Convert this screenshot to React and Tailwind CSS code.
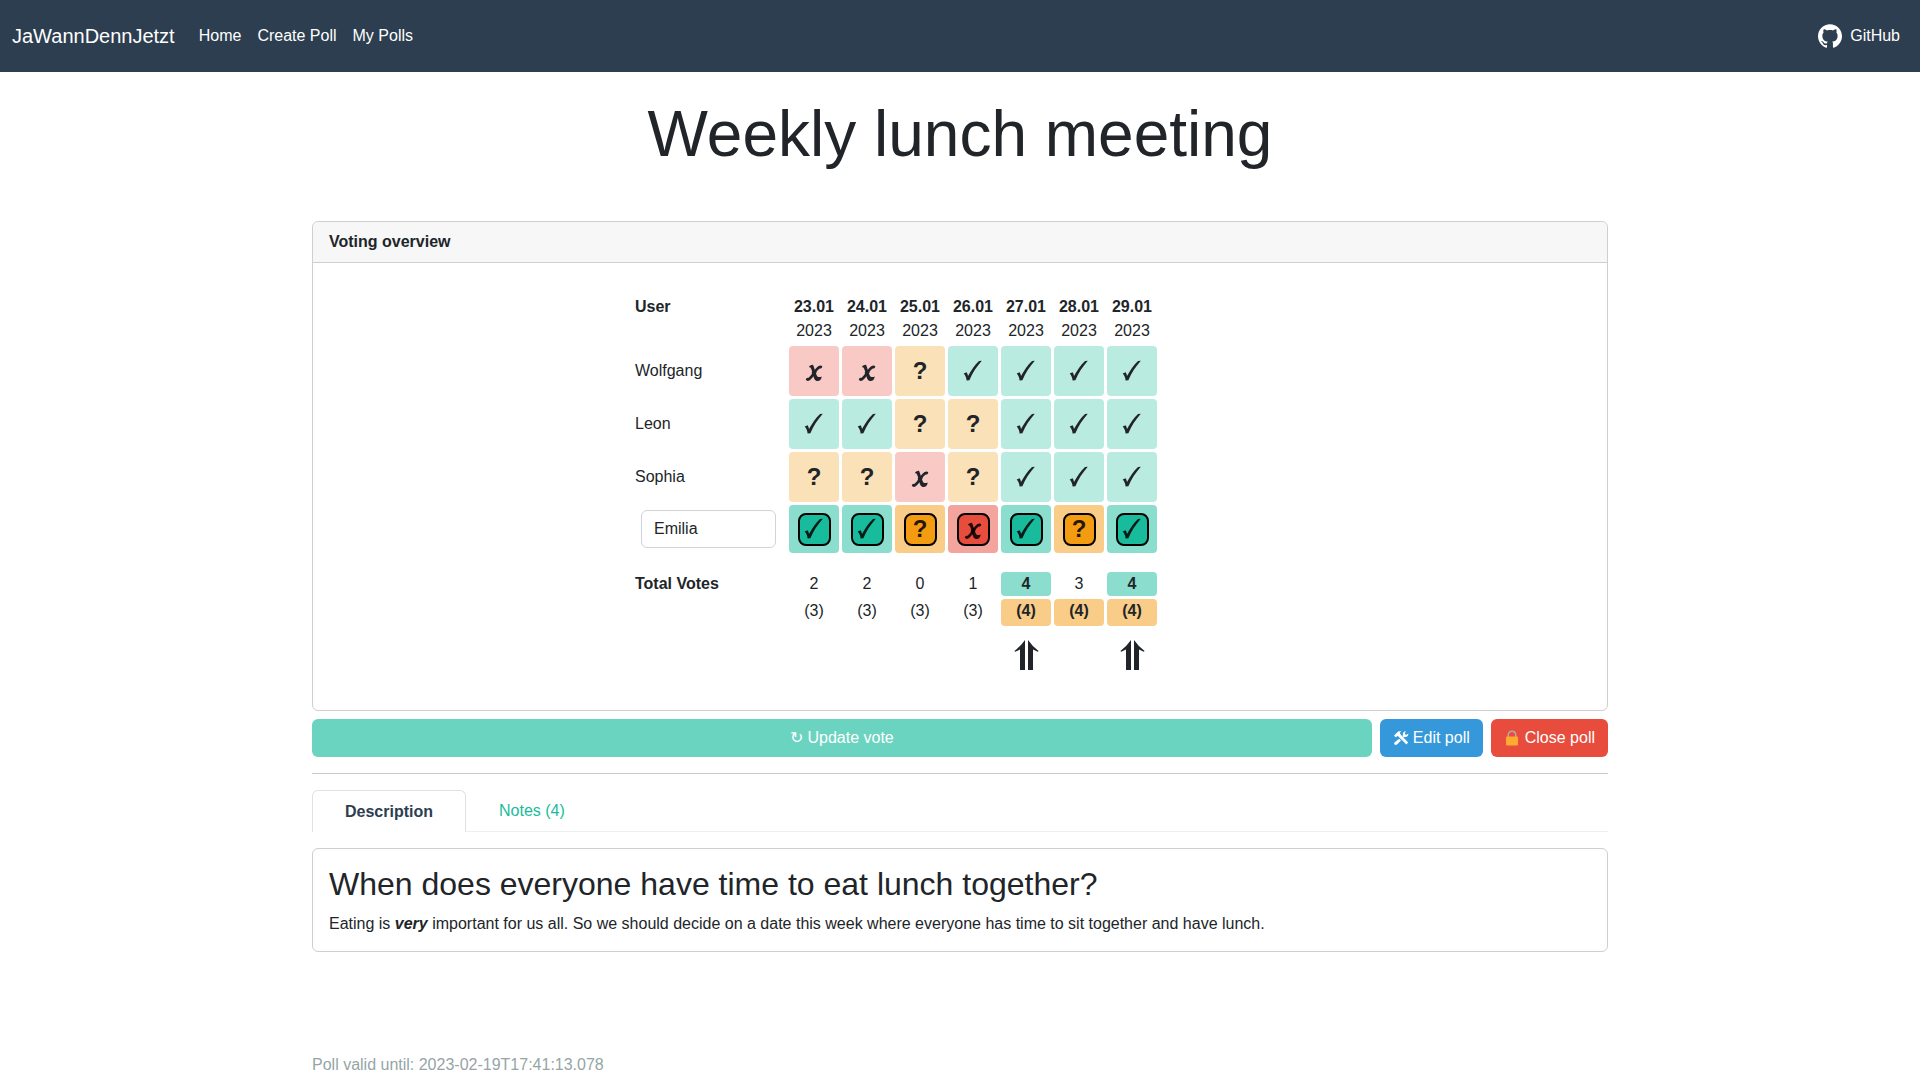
import { SiGithub } from "react-icons/si";

const DATES = ["23.01", "24.01", "25.01", "26.01", "27.01", "28.01", "29.01"];

const VOTES = [
  { name: "Wolfgang", votes: ["no", "no", "maybe", "yes", "yes", "yes", "yes"] },
  { name: "Leon", votes: ["yes", "yes", "maybe", "maybe", "yes", "yes", "yes"] },
  { name: "Sophia", votes: ["maybe", "maybe", "no", "maybe", "yes", "yes", "yes"] },
];

const OWN_VOTES = ["yes", "yes", "maybe", "no", "yes", "maybe", "yes"];

const TOTALS = [
  { yes: 2, possible: 3 },
  { yes: 2, possible: 3 },
  { yes: 0, possible: 3 },
  { yes: 1, possible: 3 },
  { yes: 4, possible: 4 },
  { yes: 3, possible: 4 },
  { yes: 4, possible: 4 },
];

const LABEL = { yes: "Yes", no: "No", maybe: "Maybe" };
const LIGHT = { yes: "bg-[#baebe1]", no: "bg-[#f8c9c5]", maybe: "bg-[#fbe1b8]" };
const MEDIUM = { yes: "bg-[#8bdecd]", no: "bg-[#f3a59d]", maybe: "bg-[#f9cd88]" };
const STRONG = { yes: "bg-[#18bc9c]", no: "bg-[#e74c3c]", maybe: "bg-[#f39c12]" };

function VoteSymbol({ vote }) {
  if (vote === "maybe") return "?";
  return (
    <svg viewBox="0 0 24 24" className="mx-auto size-6" fill="currentColor" aria-hidden="true">
      {vote === "yes" ? (
        <path d="M2.7 14.6 L5.6 13.2 C6.4 14.4 6.8 15.6 7 17 C10 11.5 13.6 6 18 2 L20.8 1.8 C15.4 8 11.4 14 8.4 21.2 L5.6 21.6 C5.4 18.8 4.4 16.4 2.7 14.6 Z" />
      ) : (
        <>
          <path d="M6.8 8 C8 6.2 9.6 5.6 11 5.7 C12.3 8.3 13 12.4 14.8 16.4 C15.6 18.2 17.4 18.4 19.8 17.4 C19.2 20.4 17.8 22 15.6 22 C12.8 22 11.8 19 10.9 15.4 C10.2 12.4 9.5 9.8 8.4 8.4 Z" />
          <path d="M3.8 20.6 C3.9 19.2 5.2 18.3 6.6 18.8 C10 16 12.2 9.8 16.6 7 C17.9 6.2 19.6 6.2 20.2 7.2 C20.4 8.6 19.2 9.5 17.8 9.5 C14.2 11.6 11.8 18.6 7.4 21.6 C5.9 22.5 4.3 22 3.8 20.6 Z" />
          <path d="M9.6 13.5 L12.8 10.8 L14.6 13.6 L11.4 17.4 Z" />
        </>
      )}
    </svg>
  );
}

function BestArrows() {
  return (
    <svg viewBox="0 0 25 30" className="mx-auto h-[30px] w-[25px]" fill="currentColor" aria-label="Best date" role="img">
      <path d="M11 0 V30 H6 V9.5 L1.2 11.8 L0.4 11 Q6.5 6.5 11 0 Z" />
      <path d="M14 0 V30 H19 V9.5 L23.8 11.8 L24.6 11 Q18.5 6.5 14 0 Z" />
    </svg>
  );
}

function ToolsIcon() {
  return (
    <svg viewBox="0 0 16 16" className="size-4" fill="currentColor" aria-hidden="true">
      <path d="M1 5.6 L5.2 1.4 L8.2 1 L6.9 2.8 L7.6 4.6 L15.2 12.6 L13.4 14.6 L5.4 6.6 L4.6 6 L2.6 7.2 Z" />
      <path d="M10 5.2 C9.4 3.2 10.6 1.2 13 1.2 L11.8 3 L12.2 4.4 L13.6 4.8 L15.3 3.4 C15.6 5.8 13.8 7.4 11.6 6.9 L10.9 7.6 L9.2 5.9 Z" />
      <path d="M6.3 8.8 L8 10.5 L4 14.5 C3.2 15.2 2.2 15.1 1.6 14.5 C1 13.9 1 13 1.7 12.3 Z" />
    </svg>
  );
}

function LockIcon() {
  return (
    <svg viewBox="0 0 16 16" className="size-4" aria-hidden="true">
      <path d="M4.3 8 V4.9 C4.3 2.8 5.9 1.2 8 1.2 C10.1 1.2 11.7 2.8 11.7 4.9 V8" fill="none" stroke="#b9a8a8" strokeWidth="1.5" />
      <rect x="2" y="6.6" width="12" height="9" rx="1" fill="#ffa930" />
    </svg>
  );
}

function NavBar() {
  return (
    <nav className="flex h-18 items-center bg-[#2c3e50] px-3 text-white">
      <a href="#" className="mr-4 text-xl">JaWannDennJetzt</a>
      <div className="flex grow">
        <a href="#" className="p-2">Home</a>
        <a href="#" className="p-2">Create Poll</a>
        <a href="#" className="p-2">My Polls</a>
      </div>
      <a href="#" className="flex items-center gap-2 p-2">
        <SiGithub className="size-6" aria-hidden="true" />
        GitHub
      </a>
    </nav>
  );
}

function VotingTable() {
  return (
    <table className="mx-auto border-separate border-spacing-[3px] text-center">
      <thead>
        <tr>
          <th className="w-[151px] p-0 text-left align-top">User</th>
          {DATES.map((d) => (
            <th key={d} className="w-[50px] p-0">
              {d}
              <div className="font-normal">2023</div>
            </th>
          ))}
        </tr>
      </thead>
      <tbody>
        {VOTES.map((row) => (
          <tr key={row.name} className="h-[50px]">
            <th scope="row" className="p-0 text-left font-normal">{row.name}</th>
            {row.votes.map((v, i) => (
              <td key={i} aria-label={LABEL[v]} className={`rounded p-0 text-2xl font-bold ${LIGHT[v]}`}>
                <VoteSymbol vote={v} />
              </td>
            ))}
          </tr>
        ))}
        <tr className="h-12">
          <td className="px-[6px] py-0">
            <input
              type="text"
              aria-label="Your name"
              defaultValue="Emilia"
              className="mr-1 block h-[38px] w-[135px] rounded-md border border-[#ced4da] px-3"
            />
          </td>
          {OWN_VOTES.map((v, i) => (
            <td key={i} className={`rounded p-0 ${MEDIUM[v]}`}>
              <button
                type="button"
                aria-label={`${DATES[i]}: ${LABEL[v]}`}
                className={`mx-auto flex size-[33px] items-center justify-center rounded-lg border-2 border-black text-2xl font-bold text-black/85 ${STRONG[v]}`}
              >
                <VoteSymbol vote={v} />
              </button>
            </td>
          ))}
        </tr>
      </tbody>
      <tfoot>
        <tr className="h-[13px]">
          <td colSpan={8} className="p-0"></td>
        </tr>
        <tr className="h-6">
          <th scope="row" className="p-0 text-left">Total Votes</th>
          {TOTALS.map((t, i) => (
            <td key={i} className={t.yes === 4 ? "rounded bg-[#8bdecd] p-0 font-bold" : "p-0"}>{t.yes}</td>
          ))}
        </tr>
        <tr className="h-[27px]">
          <td className="p-0"></td>
          {TOTALS.map((t, i) => (
            <td key={i} className={t.possible === 4 ? "rounded bg-[#f9cd88] px-0 pt-0 pb-[3px] font-bold" : "px-0 pt-0 pb-[3px]"}>
              ({t.possible})
            </td>
          ))}
        </tr>
        <tr className="h-[52px]">
          <td className="p-0"></td>
          {TOTALS.map((t, i) => (
            <td key={i} className="p-0">{t.yes === 4 && <BestArrows />}</td>
          ))}
        </tr>
      </tfoot>
    </table>
  );
}

export default function App() {
  return (
    <div className="bg-white font-['Liberation_Sans',Arial,sans-serif] text-base text-[#212529]">
      <NavBar />
      <main className="mx-auto max-w-[1320px] px-3">
        <h1 className="mt-6 mb-12 text-center text-[64px] leading-[77px]">Weekly lunch meeting</h1>

        <section className="mb-2 rounded-md border border-[#cfcfcf]">
          <h2 className="rounded-t-md border-b border-[#cfcfcf] bg-[#f7f7f7] px-4 py-2 font-bold">Voting overview</h2>
          <div className="px-4 pt-[29px] pb-[26px]">
            <div className="pr-32">
              <VotingTable />
            </div>
          </div>
        </section>

        <div className="flex gap-2">
          <button type="button" disabled className="h-[38px] grow rounded-md bg-[#6ad4c0] text-white">↻ Update vote</button>
          <button type="button" className="flex h-[38px] items-center gap-1 rounded-md bg-[#3498db] px-[13px] text-white">
            <ToolsIcon />
            Edit poll
          </button>
          <button type="button" className="flex h-[38px] items-center gap-[5px] rounded-md bg-[#e74c3c] px-[13px] text-white">
            <LockIcon />
            Close poll
          </button>
        </div>

        <hr className="my-4 border-[#c8c9ca]" />

        <div role="tablist" className="mb-4 flex border-b border-[#ecf0f1]">
          <button type="button" role="tab" aria-selected="true" className="-mb-px h-[42px] rounded-t-md border border-b-0 border-[#dee2e6] bg-white px-8 font-bold text-[#2c3e50]">
            Description
          </button>
          <button type="button" role="tab" aria-selected="false" className="border border-transparent px-8 text-[#18bc9c]">Notes (4)</button>
        </div>

        <section className="rounded-md border border-[#cfcfcf] px-4 pt-4 pb-[15px]">
          <h2 className="mb-[9px] text-[32px] leading-[38px]">When does everyone have time to eat lunch together?</h2>
          <p>
            Eating is <strong><em>very</em></strong> important for us all. So we should decide on a date this week where everyone has time to sit together and have lunch.
          </p>
        </section>

        <footer className="pt-[101px] text-[#95a5a6]">Poll valid until: 2023-02-19T17:41:13.078</footer>
      </main>
    </div>
  );
}
